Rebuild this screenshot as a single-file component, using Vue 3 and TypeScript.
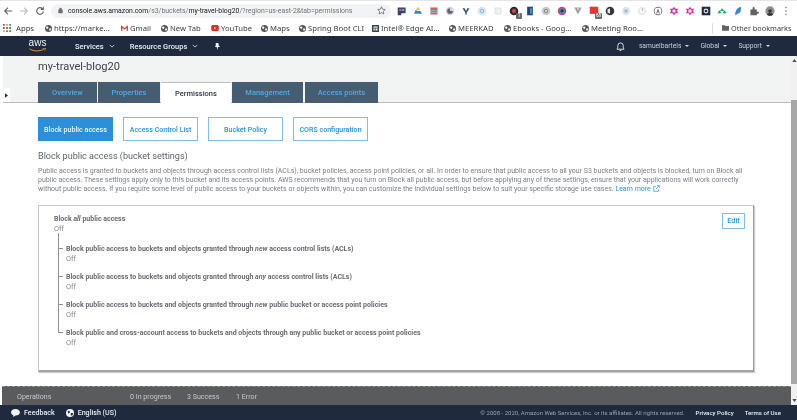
<script setup lang="ts">
type Shape = { d: string; fill: string };
type Ext = { shapes: Shape[]; badge?: string };

const circle = (r: number, fill: string): Shape => ({
  d: `M${7 - r} 7a${r} ${r} 0 1 0 ${r * 2} 0a${r} ${r} 0 1 0 ${-r * 2} 0z`,
  fill,
});

const exts: Ext[] = [
  { shapes: [{ d: 'M1 2h11v8H6v3H1z', fill: '#3a3f73' }, { d: 'M3 4h3v3H3z', fill: '#e0578f' }, { d: 'M7 4h3v3H7z', fill: '#4fb3d9' }], badge: ' ' },
  { shapes: [{ d: 'M7 1l3 5H4z', fill: '#f2b92e' }, { d: 'M3.5 7h7l2 4h-10z', fill: '#3b82d6' }, { d: 'M3.5 6L1.5 11h1l3-5z', fill: '#2a9d5c' }] },
  { shapes: [{ d: 'M2 2h10v4H2z', fill: '#d9606a' }, { d: 'M2 6h10v3H2z', fill: '#3cb878' }, { d: 'M2 9h10v3H2z', fill: '#d85aa5' }] },
  { shapes: [circle(6, '#d5d6d8'), { d: 'M7 3a4 4 0 1 0 4 4H7z', fill: '#5f6672' }] },
  { shapes: [{ d: 'M2 3h3l2 4 2-4h3l-4 6v3H6V9z', fill: '#33507c' }] },
  { shapes: [circle(6, '#d4e6f6'), circle(3, '#8dbce8'), circle(1.4, '#e9f3fb')] },
  { shapes: [{ d: 'M2 2h10v10H2z', fill: '#e6e6e6' }, { d: 'M4 4h6v6H4z', fill: '#f1f1f1' }] },
  { shapes: [circle(6, '#2a2a2e'), circle(3, '#c8473f')], badge: '1' },
  { shapes: [{ d: 'M3 1h8v12H3z', fill: '#26466f' }, { d: 'M7 3h3v8H7z', fill: '#3d8fd4' }] },
  { shapes: [circle(6, '#c9c9cb'), circle(3, '#8f8f92'), circle(1.5, '#dcdcdd')] },
  { shapes: [circle(6, '#c43fa3'), circle(4, '#2f9e8f'), circle(2, '#2a2a3a')] },
  { shapes: [{ d: 'M2 2h10L7 12z', fill: '#9c9c9c' }, { d: 'M5.5 3h3L7 7z', fill: '#dcdcdc' }] },
  { shapes: [{ d: 'M1 1h12v10H1z', fill: '#dd3b30' }], badge: '68' },
  { shapes: [circle(6, '#33383f'), { d: 'M7 3v8L3.5 9V5z', fill: '#e8e8e8' }] },
  { shapes: [circle(5.5, '#dde3ea'), circle(2.5, '#a9b8cc')] },
  { shapes: [circle(6, '#e9e9e9'), circle(3.5, '#f6f6f6'), { d: 'M7 3h1v4H7z', fill: '#a0a0a0' }] },
  { shapes: [circle(6, '#4a4f57'), circle(5, '#ffffff'), { d: 'M7 3.5l2.5 7H8.3L7 6.5 5.7 10.500H4.500z', fill: '#4a4f57' }] },
  { shapes: [{ d: 'M7 1l2 3h4l-2 3 2 3H9l-2 3-2-3H1l2-3-2-3h4z', fill: '#d02fb0' }, circle(2.2, '#ffffff')] },
  { shapes: [{ d: 'M7 1l2 3h4l-2 3 2 3H9l-2 3-2-3H1l2-3-2-3h4z', fill: '#d02fb0' }, circle(2.6, '#fbe3d0')] },
  { shapes: [{ d: 'M1 1h12v12H1z', fill: '#1f2a3e' }, circle(3.4, '#e8e8e8'), circle(1.9, '#1f2a3e')] },
  { shapes: [{ d: 'M7 3l3 4H4z', fill: '#1fa85a' }, { d: 'M3.500 6l3 4h-6zM10.500 6l3 4h-6z', fill: '#1fa85a' }] },
  { shapes: [{ d: 'M11 1C6 2 3 7 3 12l1 1c1-1 2-2 3-2 3-1 5-5 4-10z', fill: '#3b86d8' }] },
  { shapes: [{ d: 'M2 5h3V3a1.500 1.500 0 0 1 3 0v2h3v3h1.500a1.500 1.500 0 0 1 0 3H11v2H2z', fill: '#5f6368' }] },
  { shapes: [circle(6.5, '#8d9094'), circle(2.5, '#33383f'), { d: 'M2.500 12c1-3 8-3 9 0l-2 1.500h-5z', fill: '#33383f' }] },
  { shapes: [circle(1, '#5f6368'), { d: 'M6 2a1 1 0 1 0 2 0a1 1 0 1 0-2 0zM6 12a1 1 0 1 0 2 0a1 1 0 1 0-2 0z', fill: '#5f6368' }] },
];

const bookmarks = [
  { label: 'https://marke...', icon: 'globe', w: 76 },
  { label: 'Gmail', icon: 'gmail', w: 40 },
  { label: 'New Tab', icon: 'globe', w: 50 },
  { label: 'YouTube', icon: 'youtube', w: 50 },
  { label: 'Maps', icon: 'globe', w: 38 },
  { label: 'Spring Boot CLI', icon: 'globe', w: 73 },
  { label: 'Intel® Edge AI...', icon: 'intel', w: 77 },
  { label: 'MEERKAD', icon: 'globe', w: 55 },
  { label: 'Ebooks - Goog...', icon: 'globe', w: 78 },
  { label: 'Meeting Roo...', icon: 'globe', w: 70 },
];

const tabs = ['Overview', 'Properties', 'Permissions', 'Management', 'Access points'];
const subTabs = ['Block public access', 'Access Control List', 'Bucket Policy', 'CORS configuration'];

const settings = [
  { before: 'Block public access to buckets and objects granted through ', em: 'new', after: ' access control lists (ACLs)' },
  { before: 'Block public access to buckets and objects granted through ', em: 'any', after: ' access control lists (ACLs)' },
  { before: 'Block public access to buckets and objects granted through ', em: 'new', after: ' public bucket or access point policies' },
  { before: 'Block public and cross-account access to buckets and objects through any public bucket or access point policies', em: '', after: '' },
];
</script>

<template>
  <div class="page">
    <header class="browser">
      <div class="toolbar">
        <div class="nav-btns">
          <svg viewBox="0 0 12 12" width="10" height="10"><path d="M11 6H2M6 2L2 6l4 4" fill="none" stroke="#5f6368" stroke-width="1.300" /></svg>
          <svg viewBox="0 0 12 12" width="10" height="10"><path d="M1 6h9M6 2l4 4-4 4" fill="none" stroke="#b8babd" stroke-width="1.300" /></svg>
          <svg viewBox="0 0 12 12" width="10" height="10"><path d="M10 6.500A4 4 0 1 1 9 3.300M10 1v3H7" fill="none" stroke="#5f6368" stroke-width="1.300" /></svg>
        </div>
        <div class="omnibox">
          <svg viewBox="0 0 8 10" width="5" height="7"><path d="M1 4h6v5H1zM2.200 4V2.800a1.800 1.800 0 0 1 3.600 0V4" fill="#5f6368" stroke="#5f6368" stroke-width=".7" fill-opacity=".9" /></svg>
          <span class="url"><b>console.aws.amazon.com</b>/s3/buckets/<b>my-travel-blog20</b>/?region=us-east-2&amp;tab=permissions</span>
          <svg class="star" viewBox="0 0 12 12" width="9" height="9"><path d="M6 1l1.500 3.300 3.500.4-2.600 2.400.7 3.600L6 8.900l-3.100 1.800.7-3.600L1 4.700l3.500-.4z" fill="none" stroke="#5f6368" /></svg>
        </div>
        <div class="exts">
          <span v-for="(ext, i) in exts" :key="i" class="ext">
            <svg viewBox="0 0 14 14" width="10" height="10">
              <path v-for="(shape, j) in ext.shapes" :key="j" :d="shape.d" :fill="shape.fill" />
            </svg>
            <i v-if="ext.badge" class="badge">{{ ext.badge }}</i>
          </span>
        </div>
      </div>
      <div class="bookmarks">
        <span class="bm apps">
          <svg viewBox="0 0 9 9" width="8" height="8">
            <path d="M0 0h2v2H0z" fill="#d9443a" /><path d="M3.500 0h2v2h-2z" fill="#e8a33b" /><path d="M7 0h2v2H7z" fill="#3b82d6" />
            <path d="M0 3.500h2v2H0z" fill="#3b82d6" /><path d="M3.500 3.500h2v2h-2z" fill="#d9443a" /><path d="M7 3.500h2v2H7z" fill="#2a9d5c" />
            <path d="M0 7h2v2H0z" fill="#e8a33b" /><path d="M3.500 7h2v2h-2z" fill="#2a9d5c" /><path d="M7 7h2v2H7z" fill="#d9443a" />
          </svg>
          Apps
        </span>
        <span v-for="b in bookmarks" :key="b.label" class="bm" :style="{ width: b.w + 'px' }">
          <svg v-if="b.icon === 'globe'" viewBox="0 0 10 10" width="7" height="7"><circle cx="5" cy="5" r="5" fill="#55585c" /><path d="M1 3l3-1 1 2-2 2zM6 5l3 0-1 3-2 0z" fill="#fff" /></svg>
          <svg v-else-if="b.icon === 'gmail'" viewBox="0 0 10 8" width="7" height="6"><path d="M0 8V0l5 4 5-4v8H8V4L5 6.300 2 4v4z" fill="#d6443a" /></svg>
          <svg v-else-if="b.icon === 'youtube'" viewBox="0 0 10 8" width="8" height="6"><rect width="10" height="8" rx="2" fill="#e32b22" /><path d="M4 2.500l2.500 1.500L4 5.500z" fill="#fff" /></svg>
          <svg v-else viewBox="0 0 10 10" width="7" height="7"><path d="M0 0h10v10H0z" fill="#3c4654" /><path d="M2 2h6v2H2zM2 5h2v3H2zM5 5h3v3H5z" fill="#e8e8e8" /></svg>
          {{ b.label }}
        </span>
        <span class="bm other">
          <svg viewBox="0 0 10 8" width="7" height="6"><path d="M0 0h4l1 1h5v7H0z" fill="#5f6368" /></svg>
          Other bookmarks
        </span>
      </div>
    </header>

    <nav class="aws-nav">
      <div class="logo">
        <span>aws</span>
        <svg viewBox="0 0 22 5" width="21" height="4"><path d="M1 1c5 3.500 13 3.500 18 .3" fill="none" stroke="#f29a2e" stroke-width="1.200" /><path d="M17.500 .5l3.500-.3-1 3" fill="none" stroke="#f29a2e" /></svg>
      </div>
      <a class="menu services">Services <svg class="chev" viewBox="0 0 8 5"><path d="M1 1l3 3 3-3" fill="none" stroke="#d5dbdb" stroke-width="1.100" /></svg></a>
      <a class="menu groups">Resource Groups <svg class="chev" viewBox="0 0 8 5"><path d="M1 1l3 3 3-3" fill="none" stroke="#d5dbdb" stroke-width="1.100" /></svg></a>
      <svg class="pin" viewBox="0 0 8 8" width="7" height="7"><path d="M2 0h3l.5 3L7 4.500H4.500L4 8 3 4.500H1L2 3z" fill="#f2f3f3" /></svg>
      <div class="nav-right">
        <svg class="bell" viewBox="0 0 10 12" width="9" height="11"><path d="M1 9c1-1 1-2 1-4a3 3 0 0 1 6 0c0 2 0 3 1 4zM4 10.500h2" fill="none" stroke="#f2f3f3" /></svg>
        <a class="small user">samuelbartels<i class="caret" /></a>
        <a class="small region">Global<i class="caret" /></a>
        <a class="small">Support<i class="caret" /></a>
      </div>
    </nav>

    <div class="body-row">
      <main class="main">
        <div class="head">
          <h1>my-travel-blog20</h1>
          <div class="tabs">
            <span v-for="tab in tabs" :key="tab" class="tab" :class="{ active: tab === 'Permissions' }">{{ tab }}</span>
          </div>
        </div>
        <div class="panel">
          <div class="sub-tabs">
            <span v-for="(tab, i) in subTabs" :key="tab" class="sub-tab" :class="{ active: i === 0 }">{{ tab }}</span>
          </div>
          <h2>Block public access (bucket settings)</h2>
          <p class="desc">
            Public access is granted to buckets and objects through access control lists (ACLs), bucket policies, access point policies, or all. In order to ensure that public access to all your S3 buckets and objects is blocked, turn on Block all<br>
            public access. These settings apply only to this bucket and its access points. AWS recommends that you turn on Block all public access, but before applying any of these settings, ensure that your applications will work correctly<br>
            without public access. If you require some level of public access to your buckets or objects within, you can customize the individual settings below to suit your specific storage use cases.
            <a>Learn more
              <svg viewBox="0 0 10 10" width="7" height="7"><path d="M8 6v3H1V2h3M5.500 1H9v3.500M9 1L4.500 5.500" fill="none" stroke="#2b92d8" /></svg>
            </a>
          </p>
          <section class="card">
            <div class="card-top">
              <div>
                <div class="name">Block <em>all</em> public access</div>
                <div class="val">Off</div>
              </div>
              <button type="button" class="edit">Edit</button>
            </div>
            <div class="tree">
              <div v-for="(s, i) in settings" :key="i" class="leaf" :class="{ last: i === settings.length - 1 }">
                <div class="conn"><span class="conn-top" /><span class="conn-rest" /></div>
                <div class="leaf-text">
                  <div class="name">{{ s.before }}<em v-if="s.em">{{ s.em }}</em>{{ s.after }}</div>
                  <div class="val">Off</div>
                </div>
              </div>
            </div>
          </section>
        </div>
        <div class="ops">
          <span class="ops-title">Operations</span>
          <span class="ops-a">0 In progress</span>
          <span class="ops-b">3 Success</span>
          <span>1 Error</span>
        </div>
        <div class="handle"><svg viewBox="0 0 4 6" width="3" height="5"><path d="M0 0l4 3-4 3z" fill="#232f3e" /></svg></div>
      </main>
      <div class="scrollbar">
        <svg viewBox="0 0 6 4" width="5" height="3"><path d="M3 0l3 4H0z" fill="#505050" /></svg>
        <div class="track"><div class="thumb" /></div>
        <svg viewBox="0 0 6 4" width="5" height="3"><path d="M3 4l3-4H0z" fill="#505050" /></svg>
      </div>
    </div>

    <footer class="foot">
      <svg viewBox="0 0 10 9" width="9" height="8"><path d="M5 0c3 0 5 1.500 5 3.700S8 7.400 5 7.400L2.500 9V7C1 6.500 0 5.300 0 3.700 0 1.500 2 0 5 0z" fill="#f2f3f3" /></svg>
      <span class="fb">Feedback</span>
      <svg class="globe" viewBox="0 0 10 10" width="8" height="8"><circle cx="5" cy="5" r="5" fill="#f2f3f3" /><path d="M2 3l2-1 1 2-2 2zM6 5l3 0-1 3-2 0z" fill="#232f3e" /></svg>
      <span class="fb">English (US)</span>
      <span class="copy">© 2008 - 2020, Amazon Web Services, Inc. or its affiliates. All rights reserved.</span>
      <span class="fb privacy">Privacy Policy</span>
      <span class="fb terms">Terms of Use</span>
    </footer>
  </div>
</template>

<style scoped>
.page {
  display: flex;
  flex-direction: column;
  width: 797px;
  height: 420px;
  overflow: hidden;
  font-family: Roboto, "Liberation Sans", sans-serif;
  background: #fff;
  filter: blur(0.3px);
}

.browser {
  height: 36px;
  flex: none;
  background: #fff;
  border-top: 1px solid #e4e5e7;
  box-sizing: border-box;
}

.toolbar {
  display: flex;
  align-items: center;
  height: 19px;
}

.nav-btns {
  display: flex;
  gap: 6px;
  width: 51px;
  padding-left: 3px;
  box-sizing: border-box;
}

.omnibox {
  display: flex;
  align-items: center;
  width: 340px;
  height: 14px;
  padding: 0 5px 0 7px;
  box-sizing: border-box;
  background: #f1f3f4;
  border-radius: 7px;
}

.url {
  flex: 1;
  margin-left: 5px;
  color: #70757a;
  font-size: 6.900px;
  white-space: nowrap;
}

.url b {
  color: #202124;
  font-weight: 400;
}

.exts {
  display: flex;
  margin-left: 3px;
}

.ext {
  position: relative;
  display: flex;
  justify-content: center;
  width: 16px;
}

.badge {
  position: absolute;
  right: 0;
  bottom: -3px;
  padding: 0 1px;
  min-width: 4px;
  color: #fff;
  background: #6a6d70;
  border-radius: 1px;
  font-size: 4.500px;
  font-style: normal;
  line-height: 6px;
  text-align: center;
}

.bookmarks {
  display: flex;
  align-items: center;
  height: 16px;
  padding-left: 3px;
  color: #3c4043;
  font-family: "Noto Sans", sans-serif;
  font-size: 7.700px;
  white-space: nowrap;
}

.bm {
  display: flex;
  flex: none;
  align-items: center;
  gap: 2px;
  box-sizing: border-box;
}

.apps {
  gap: 5px;
  width: 42px;
}

.other {
  width: 85px;
  margin-left: auto;
  padding-left: 9px;
  height: 11px;
  gap: 2px;
  font-size: 7.300px;
  border-left: 1px solid #dadce0;
}

.aws-nav {
  display: flex;
  flex: none;
  align-items: center;
  height: 20px;
  color: #eaeded;
  background: #1f2a3e;
  font-size: 7.500px;
}

.logo {
  display: flex;
  flex-direction: column;
  align-items: center;
  width: 21px;
  margin-top: -2px;
  margin-left: 27px;
  color: #f2f3f3;
  font-family: "Liberation Sans", sans-serif;
  font-size: 10px;
  line-height: 8px;
}

.logo svg {
  margin-top: 1px;
}

.menu {
  display: flex;
  align-items: center;
  font-weight: 500;
}

.services {
  margin-left: 27px;
}

.groups {
  margin-left: 15px;
}

.chev {
  width: 6px;
  height: 4px;
  margin-left: 5px;
}

.pin {
  margin-left: 16px;
}

.nav-right {
  display: flex;
  align-items: center;
  margin-left: auto;
  margin-right: 27px;
}

.bell {
  margin-right: 14px;
}

.small {
  display: flex;
  align-items: center;
  color: #c9ced3;
  font-size: 6.700px;
}

.user {
  margin-right: 11px;
}

.region {
  margin-right: 11px;
}

.caret {
  width: 0;
  height: 0;
  margin-left: 4px;
  border-top: 2.500px solid #d5dbdb;
  border-left: 2.500px solid transparent;
  border-right: 2.500px solid transparent;
}

.body-row {
  display: flex;
  flex: 1;
  min-height: 0;
}

.main {
  position: relative;
  display: flex;
  flex: 1;
  flex-direction: column;
  min-width: 0;
  padding-left: 3px;
  background: #fff;
}

.head {
  height: 47px;
  padding: 4px 0 0 35px;
  box-sizing: border-box;
  background: #f2f3f3;
  border-bottom: 1px solid #b9bcbd;
}

h1 {
  margin: 0;
  color: #3d4450;
  font-size: 11.100px;
  font-weight: 400;
  line-height: 14px;
}

.tabs {
  display: flex;
  gap: 1px;
  margin-top: 8px;
}

.tab {
  display: flex;
  align-items: center;
  justify-content: center;
  height: 21px;
  color: #4fa9e8;
  background: #465c70;
  font-size: 7.500px;
  font-weight: 500;
}

.tab:nth-child(1) { width: 59px; }
.tab:nth-child(2) { width: 62px; }
.tab:nth-child(3) { width: 70px; height: 22px; color: #2d3640; background: #fff; border-top: 1px solid #b9bcbd; box-sizing: border-box; }
.tab:nth-child(4) { width: 71px; margin-right: 1px; }
.tab:nth-child(5) { width: 73px; }

.panel {
  flex: 1;
  min-height: 0;
  padding: 14px 37px 0 35px;
}

.sub-tabs {
  display: flex;
  gap: 10px;
}

.sub-tab {
  display: flex;
  align-items: center;
  justify-content: center;
  width: 75px;
  height: 24px;
  box-sizing: border-box;
  color: #2b92d8;
  border: 1px solid #7fbde8;
  font-size: 7.100px;
  font-weight: 500;
}

.sub-tab.active {
  color: #eaf4fb;
  background: #2b8fd9;
  border-color: #2b8fd9;
}

h2 {
  margin: 9px 0 0;
  color: #5d6670;
  font-size: 9.050px;
  font-weight: 400;
  line-height: 12px;
}

.desc {
  margin: 5px 0 0;
  color: #7b8088;
  font-size: 7px;
  line-height: 9.200px;
  white-space: nowrap;
}

.desc a {
  color: #2b92d8;
}

.desc svg {
  vertical-align: -1px;
}

.card {
  height: 167px;
  margin-top: 10px;
  padding: 7px 8px 0 15px;
  box-sizing: border-box;
  background: #fff;
  border: 1px solid #c6c9cb;
  border-right-color: #9a9da0;
  border-bottom: 2px solid #a3a6a9;
  box-shadow: 1px 1px 1px rgba(0, 0, 0, 0.2);
  width: 716px;
}

.card-top {
  display: flex;
  align-items: flex-start;
  justify-content: space-between;
}

.name {
  padding-top: 2.500px;
  color: #686d73;
  font-size: 7px;
  font-weight: 700;
  line-height: 9px;
  white-space: nowrap;
}

.val {
  color: #83888e;
  font-size: 7.300px;
  line-height: 9px;
}

.edit {
  width: 23px;
  height: 16px;
  padding: 0;
  color: #2b92d8;
  background: #fff;
  border: 1px solid #7fbde8;
  font: 500 7.200px Roboto, sans-serif;
}

.tree {
  margin-left: 4px;
}

.leaf {
  display: flex;
  height: 28px;
}

.leaf:first-child {
  height: 36.900px;
}

.leaf:first-child .leaf-text {
  padding-top: 8.900px;
}

.leaf:first-child .conn-top {
  height: 16px;
}

.leaf-text {
  margin-left: 3px;
}

.conn {
  display: flex;
  flex: none;
  flex-direction: column;
  width: 5px;
}

.conn-top {
  flex: none;
  height: 7px;
  border-left: 1px solid #8d9196;
  border-bottom: 1px solid #8d9196;
  box-sizing: border-box;
}

.conn-rest {
  flex: 1;
  border-left: 1px solid #8d9196;
}

.leaf.last .conn-rest {
  border-left: 0;
}

.ops {
  display: flex;
  flex: none;
  align-items: center;
  height: 19px;
  margin-left: -1px;
  padding-left: 15px;
  color: #c4c7c9;
  background: #5a5b5c;
  border-top: 1px dashed #8a8a8a;
  box-sizing: border-box;
  font-size: 7.100px;
}

.ops-title {
  width: 113px;
}

.ops-a {
  width: 57px;
}

.ops-b {
  width: 49px;
}

.handle {
  position: absolute;
  top: 32px;
  left: 3px;
  display: flex;
  align-items: center;
  justify-content: center;
  width: 7px;
  height: 14px;
  background: #fff;
}

.scrollbar {
  display: flex;
  flex: none;
  flex-direction: column;
  align-items: center;
  justify-content: space-between;
  width: 6px;
  padding: 3px 0;
  box-sizing: border-box;
  background: #f1f1f1;
}

.track {
  flex: 1;
  width: 100%;
  padding-top: 38px;
  box-sizing: border-box;
}

.thumb {
  height: 284px;
  background: #a8a8a8;
}

.foot {
  display: flex;
  flex: none;
  align-items: center;
  height: 15px;
  padding-left: 11px;
  color: #eaeded;
  background: #1f2a3e;
  font-size: 7.100px;
}

.fb {
  margin-left: 4px;
  font-weight: 500;
}

.globe {
  margin-left: 11px;
}

.copy {
  margin-left: auto;
  color: #99a0a8;
  font-size: 6px;
}

.privacy {
  margin-left: 11px;
  font-size: 6.100px;
}

.terms {
  margin-left: 11px;
  margin-right: 16px;
  font-size: 6.100px;
}
</style>
